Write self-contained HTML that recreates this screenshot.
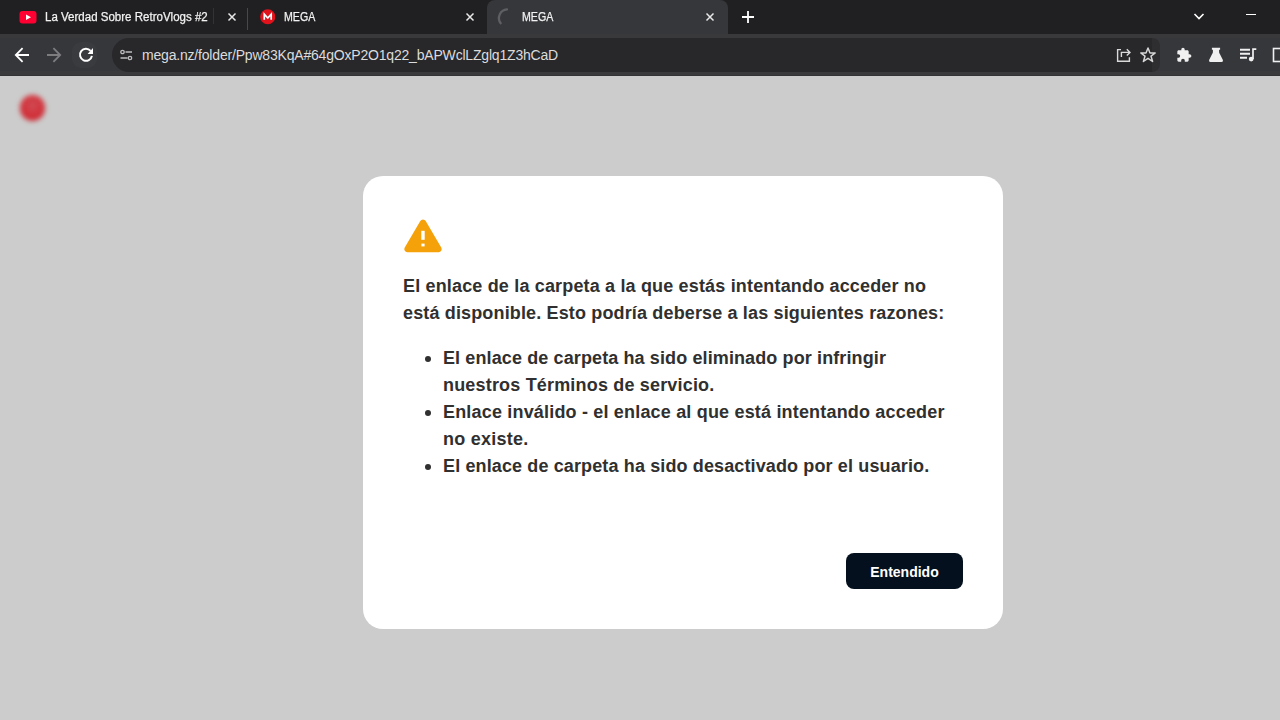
<!DOCTYPE html>
<html><head><meta charset="utf-8">
<style>
*{margin:0;padding:0;box-sizing:border-box}
html,body{width:1280px;height:720px;overflow:hidden;background:#cccccc;font-family:"Liberation Sans",sans-serif}
.abs{position:absolute}
#tabs{left:0;top:0;width:1280px;height:34px;background:#202022}
#acttab{left:487px;top:0;width:241px;height:34px;background:#36373b;border-radius:8px 8px 0 0}
.ttl{font-size:12.5px;color:#f2f2f2;-webkit-text-stroke:0.25px #f2f2f2;white-space:nowrap;top:10px;line-height:14px}
#toolbar{left:0;top:34px;width:1280px;height:42px;background:#36373b}
#omni{left:112px;top:38px;width:1040px;height:33.5px;border-radius:17px 0 0 17px;background:#28282b}
#url{left:142px;top:47px;font-size:14px;letter-spacing:-0.19px;color:#dcdcdc;line-height:16px;white-space:nowrap}
#dlg{left:363px;top:176px;width:640px;height:453px;background:#fff;border-radius:20px}
.dt{font-weight:bold;font-size:18px;line-height:27px;color:#303030;white-space:nowrap}
#btn{left:846px;top:553px;width:117px;height:36px;background:#04101e;border-radius:8px;color:#fff;font-weight:bold;font-size:14px;line-height:36px;padding-top:1px;text-align:center}
.bul{width:6px;height:6px;border-radius:3px;background:#303030}
</style></head><body>
<div id="tabs" class="abs"></div>
<div id="acttab" class="abs"></div>
<!-- tab 1 -->
<svg class="abs" style="left:19px;top:11px" width="18" height="13" viewBox="0 0 18 13"><rect x="0.5" y="0" width="17" height="12.5" rx="3" fill="#ff0033"/><path d="M7 3.5 L12 6.25 L7 9 Z" fill="#fff"/></svg>
<div class="abs ttl" style="left:44.5px;transform:scaleX(0.922);transform-origin:0 0">La Verdad Sobre RetroVlogs #2</div>
<svg class="abs" style="left:227px;top:12px" width="10" height="10" viewBox="0 0 10 10"><path d="M1.5 1.5L8.5 8.5M8.5 1.5L1.5 8.5" stroke="#e8e8e8" stroke-width="1.5"/></svg>
<div class="abs" style="left:213px;top:8px;width:1px;height:16px;background:#333335"></div>
<div class="abs" style="left:247px;top:8px;width:1px;height:22px;background:#48484b"></div>
<!-- tab 2 -->
<svg class="abs" style="left:259.5px;top:9px" width="15.5" height="15.5" viewBox="0 0 15.5 15.5"><circle cx="7.75" cy="7.75" r="7.6" fill="#e0131c"/><path d="M4.3 10.7V5.2L7.75 9L11.2 5.2V10.7" stroke="#fff" stroke-width="1.7" fill="none"/></svg>
<div class="abs ttl" style="left:283.5px;transform:scaleX(0.85);transform-origin:0 0">MEGA</div>
<svg class="abs" style="left:465px;top:12px" width="10" height="10" viewBox="0 0 10 10"><path d="M1.5 1.5L8.5 8.5M8.5 1.5L1.5 8.5" stroke="#e8e8e8" stroke-width="1.5"/></svg>
<!-- tab 3 -->
<svg class="abs" style="left:496px;top:6px" width="24" height="24" viewBox="0 0 24 24"><path d="M4.7 17.2A8.65 8.65 0 0 1 11 3.37" stroke="#5f5f63" stroke-width="2.3" fill="none" stroke-linecap="round"/></svg>
<div class="abs ttl" style="left:522px;transform:scaleX(0.85);transform-origin:0 0">MEGA</div>
<svg class="abs" style="left:705px;top:12px" width="10" height="10" viewBox="0 0 10 10"><path d="M1.5 1.5L8.5 8.5M8.5 1.5L1.5 8.5" stroke="#e8e8e8" stroke-width="1.5"/></svg>
<svg class="abs" style="left:741px;top:10px" width="14" height="14" viewBox="0 0 14 14"><path d="M7 1V13M1 7H13" stroke="#fff" stroke-width="1.8"/></svg>
<svg class="abs" style="left:1192px;top:11px" width="14" height="12" viewBox="0 0 14 12"><path d="M2.5 3L7 7.5L11.5 3" stroke="#fff" stroke-width="1.6" fill="none"/></svg>
<div class="abs" style="left:1246px;top:14px;width:10px;height:1px;background:#fff"></div>
<!-- toolbar -->
<div id="toolbar" class="abs"></div>
<div class="abs" style="left:0;top:34px;width:1280px;height:4px;background:#39393c"></div>
<div class="abs" style="left:0;top:71px;width:1280px;height:4px;background:#3a3a3d"></div>
<div class="abs" style="left:0;top:75px;width:1280px;height:1px;background:#333335"></div>
<svg class="abs" style="left:14px;top:47px" width="16" height="16" viewBox="0 0 16 16"><path d="M15 8H2.2M8.6 1.2L1.8 8L8.6 14.8" stroke="#fff" stroke-width="1.8" fill="none"/></svg>
<svg class="abs" style="left:46px;top:47px" width="16" height="16" viewBox="0 0 16 16"><path d="M1 8H13.8M7.4 1.2L14.2 8L7.4 14.8" stroke="#7d7d80" stroke-width="1.8" fill="none"/></svg>
<div class="abs" style="left:72px;top:42px;width:25px;height:26px;border-radius:9px;background:#3a3b3f"></div>
<svg class="abs" style="left:78px;top:47px" width="16" height="16" viewBox="0 0 16 16"><path d="M13.91 8.84A6 6 0 1 1 12.6 3.94" stroke="#fff" stroke-width="2" fill="none"/><path d="M9.6 6.9H15V1Z" fill="#fff"/></svg>
<div id="omni" class="abs"></div>
<div class="abs" style="left:1152px;top:38px;width:8px;height:33.5px;border-radius:0 17px 17px 0;background:#2e2e31"></div>
<svg class="abs" style="left:120px;top:49px" width="13" height="12" viewBox="0 0 13 12"><circle cx="2.5" cy="3" r="1.7" stroke="#bdbdc0" stroke-width="1.3" fill="none"/><path d="M5.5 3H12M0.5 9H7.5" stroke="#bdbdc0" stroke-width="1.5"/><circle cx="10" cy="9" r="1.7" stroke="#bdbdc0" stroke-width="1.3" fill="none"/></svg>
<div id="url" class="abs">mega.nz/folder/Ppw83KqA#64gOxP2O1q22_bAPWclLZglq1Z3hCaD</div>
<!-- share -->
<svg class="abs" style="left:1116px;top:47px" width="16" height="16" viewBox="0 0 16 16"><path d="M5 2.6H1.6V14.3H13.4V10.2" stroke="#d9d9d9" stroke-width="1.4" fill="none"/><path d="M5.4 10V5.4H13.8M10.8 2.2L14 5.4L10.8 8.6" stroke="#d9d9d9" stroke-width="1.4" fill="none"/></svg>
<svg class="abs" style="left:1139px;top:46px" width="18" height="18" viewBox="0 0 18 18"><path d="M9 2L11 7H16.2L12 10.2L13.6 15.5L9 12.3L4.4 15.5L6 10.2L1.8 7H7Z" stroke="#d6d6d6" stroke-width="1.5" fill="none" stroke-linejoin="round"/></svg>
<!-- puzzle -->
<svg class="abs" style="left:1176px;top:47px" width="16" height="16" viewBox="0 0 24 24"><path d="M20.5 11H19V7c0-1.1-.9-2-2-2h-4V3.5C13 2.12 11.88 1 10.5 1S8 2.12 8 3.5V5H4c-1.1 0-1.99.9-1.99 2v3.8H3.5c1.49 0 2.7 1.21 2.7 2.7s-1.21 2.7-2.7 2.7H2V20c0 1.1.9 2 2 2h3.8v-1.5c0-1.49 1.21-2.7 2.7-2.7 1.49 0 2.7 1.21 2.7 2.7V22H17c1.1 0 2-.9 2-2v-4h1.5c1.38 0 2.5-1.12 2.5-2.5S21.88 11 20.5 11z" fill="#f0f0f0"/></svg>
<!-- flask -->
<svg class="abs" style="left:1208px;top:47px" width="16" height="16" viewBox="0 0 16 16"><path d="M3.9 0.8H12.1V2.7H11.1V5.2Q11.3 6.2 12 7.3L14.9 13Q15.5 14.9 13.6 14.9H2.4Q0.5 14.9 1.1 13L4 7.3Q4.7 6.2 4.9 5.2V2.7H3.9Z" fill="#f0f0f0"/></svg>
<!-- media -->
<svg class="abs" style="left:1239px;top:47px" width="18" height="16" viewBox="0 0 18 16"><path d="M1 2.7H11M1 6.7H11M1 10.8H8" stroke="#f0f0f0" stroke-width="1.9"/><path d="M14 12V2.2H17.3" stroke="#f0f0f0" stroke-width="1.7" fill="none"/><circle cx="12.2" cy="12.1" r="2.4" fill="#f0f0f0"/></svg>
<svg class="abs" style="left:1272px;top:47px" width="10" height="16" viewBox="0 0 10 16"><rect x="1.5" y="1.5" width="12" height="13" stroke="#f0f0f0" stroke-width="1.6" fill="none"/></svg>

<!-- page -->
<div class="abs" style="left:19.5px;top:95px;width:25px;height:26px;border-radius:13px;background:radial-gradient(circle at 50% 40%,#cf4d55 0,#d2343d 45%,#cc2a33 70%,#d63a45 100%);filter:blur(2.6px)"></div>

<div id="dlg" class="abs"></div>
<svg class="abs" style="left:402px;top:218px" width="42" height="36" viewBox="0 0 42 36"><path d="M18.3 3.1a3.1 3.1 0 0 1 5.4 0L39.4 29.8a3.1 3.1 0 0 1-2.7 4.4H5.3a3.1 3.1 0 0 1-2.7-4.4Z" fill="#f5a20a"/><rect x="19.3" y="12.8" width="3.4" height="9" fill="#fff"/><rect x="19.4" y="25.6" width="3.2" height="2.8" fill="#fff"/></svg>
<div class="abs dt" style="left:403px;top:273px;letter-spacing:0.166px">El enlace de la carpeta a la que estás intentando acceder no</div>
<div class="abs dt" style="left:403px;top:300px;letter-spacing:0.148px">está disponible. Esto podría deberse a las siguientes razones:</div>
<div class="abs bul" style="left:425px;top:356px"></div>
<div class="abs dt" style="left:443px;top:345px;letter-spacing:0.114px">El enlace de carpeta ha sido eliminado por infringir</div>
<div class="abs dt" style="left:443px;top:372px;letter-spacing:0.179px">nuestros Términos de servicio.</div>
<div class="abs bul" style="left:425px;top:410px"></div>
<div class="abs dt" style="left:443px;top:399px;letter-spacing:0.181px">Enlace inválido - el enlace al que está intentando acceder</div>
<div class="abs dt" style="left:443px;top:426px;letter-spacing:0.244px">no existe.</div>
<div class="abs bul" style="left:425px;top:464px"></div>
<div class="abs dt" style="left:443px;top:453px;letter-spacing:0.127px">El enlace de carpeta ha sido desactivado por el usuario.</div>
<div id="btn" class="abs">Entendido</div>
</body></html>
